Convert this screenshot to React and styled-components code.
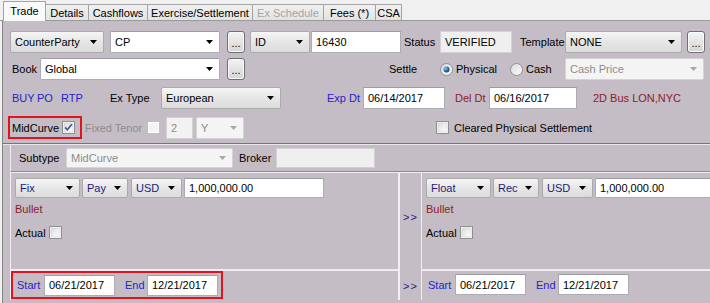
import React from 'react'
import styled, {createGlobalStyle, css} from 'styled-components'

const MAUVE = '#c4bdc6'
const BLUE = '#2424c8'
const DARKRED = '#8e1b27'
const NAVY = '#1d1d7a'
const GREY = '#8c8c8c'

const GlobalStyle = createGlobalStyle`
  html, body {
    margin: 0;
    padding: 0;
  }
  body {
    font-family: 'Liberation Sans', Arial, sans-serif;
    font-size: 11px;
    color: #000;
    background: #f0f0f0;
  }
`

const Screen = styled.div`
  width: 710px;
  height: 303px;
  overflow: hidden;
  display: flex;
  flex-direction: column;
  background: #f0f0f0;
`

const TabBar = styled.div`
  box-sizing: border-box;
  height: 21px;
  display: flex;
  align-items: flex-end;
  padding-left: 3px;
  border-bottom: 1px solid #9a9a9a;
`

const Tab = styled.div`
  box-sizing: border-box;
  width: ${p => p.$w}px;
  height: ${p => (p.$active ? 20 : 16)}px;
  margin-bottom: ${p => (p.$active ? -1 : 0)}px;
  display: flex;
  align-items: ${p => (p.$active ? 'flex-start' : 'center')};
  justify-content: center;
  padding-top: ${p => (p.$active ? 3 : 0)}px;
  border: 1px solid #a3a3a3;
  border-bottom: ${p => (p.$active ? 'none' : '0')};
  margin-right: -1px;
  background: ${p =>
    p.$active ? '#f9f9f9' : 'linear-gradient(#f0f0f0, #e3e3e3)'};
  color: ${p => (p.$disabled ? '#a5a5a5' : '#000')};
  position: relative;
  z-index: ${p => (p.$active ? 2 : 1)};
`

const Pane = styled.div`
  flex: 1;
  margin-left: 2px;
  border-left: 1px solid #858585;
  background: ${MAUVE};
  display: flex;
  flex-direction: column;
`

const TopForm = styled.div`
  padding: 10px 0 0 7px;
`

const Row = styled.div`
  display: flex;
  align-items: center;
  height: ${p => p.$h || 22}px;
  margin-top: ${p => p.$mt || 0}px;
  white-space: nowrap;
`

const Label = styled.span`
  flex: none;
  box-sizing: border-box;
  width: ${p => (p.$w ? `${p.$w}px` : 'auto')};
  margin-left: ${p => p.$ml || 0}px;
  color: ${p => p.$color || '#000'};
`

const comboSkins = {
  button: css`
    border: 1px solid #ababab;
    background: linear-gradient(#f5f5f5, #e6e6e6 50%, #dcdcdc);
  `,
  edit: css`
    border: 1px solid #abadb3;
    border-top-color: #9c9ea4;
    background: #fff;
  `,
  disabled: css`
    border: 1px solid #d5d5d5;
    background: #f4f4f4;
    color: ${GREY};
  `
}

const ComboBox = styled.div`
  flex: none;
  box-sizing: border-box;
  width: ${p => p.$w}px;
  height: ${p => p.$h || 22}px;
  margin-left: ${p => p.$ml || 0}px;
  display: flex;
  align-items: center;
  padding-left: 4px;
  border-radius: 2px;
  color: ${p => p.$color || '#000'};
  ${p => comboSkins[p.$kind || 'button']}
`

const ComboText = styled.span`
  flex: 1;
  overflow: hidden;
`

const ArrowIcon = styled.svg`
  flex: none;
  margin-right: ${p => p.$mr || 6}px;
`

const Combo = ({children, kind, w, h, ml, color}) => (
  <ComboBox $kind={kind} $w={w} $h={h} $ml={ml} $color={color}>
    <ComboText>{children}</ComboText>
    <ArrowIcon width="7" height="4" viewBox="0 0 7 4">
      <path d="M0 0 H7 L3.5 4 Z" fill={kind === 'disabled' ? '#a8a8a8' : '#000'} />
    </ArrowIcon>
  </ComboBox>
)

const fieldSkins = {
  edit: css`
    border: 1px solid #abadb3;
    border-top-color: #9c9ea4;
    background: #fff;
  `,
  readonly: css`
    border: 1px solid #d2d2d2;
    background: #efefef;
  `,
  disabled: css`
    border: 1px solid #d2d2d2;
    background: #f2f2f2;
    color: ${GREY};
  `
}

const Field = styled.div`
  flex: none;
  box-sizing: border-box;
  width: ${p => p.$w}px;
  height: ${p => p.$h || 22}px;
  margin-left: ${p => p.$ml || 0}px;
  display: flex;
  align-items: center;
  padding-left: 4px;
  ${p => fieldSkins[p.$kind || 'edit']}
`

const DotsButton = styled.div`
  flex: none;
  box-sizing: border-box;
  width: 18px;
  height: 22px;
  margin-left: ${p => p.$ml || 0}px;
  border: 1px solid #707070;
  border-radius: 3px;
  box-shadow: inset 0 0 0 1px #fafafa;
  background: linear-gradient(#f3f3f3, #e4e4e4 50%, #d6d6d6);
  display: flex;
  align-items: flex-end;
  justify-content: center;
  padding-bottom: 3px;
  font-size: 11px;
  line-height: 1;
`

const BoxIcon = styled.svg`
  flex: none;
  margin-left: ${p => p.$ml || 0}px;
`

const Check = ({checked, disabled, ml}) => (
  <BoxIcon $ml={ml} width="13" height="13" viewBox="0 0 13 13">
    <defs>
      <linearGradient id="chk" x1="0" y1="0" x2="1" y2="1">
        <stop offset="0" stopColor="#dcdcdc" />
        <stop offset="1" stopColor="#ffffff" />
      </linearGradient>
    </defs>
    <rect x="0.5" y="0.5" width="12" height="12" fill="#fff" stroke={disabled ? '#c0c0c0' : '#8e8f8f'} />
    <rect x="2" y="2" width="9" height="9" fill={disabled ? '#f4f4f4' : 'url(#chk)'} stroke={disabled ? 'none' : '#c8c8c8'} strokeWidth="0.6" />
    {checked && (
      <path d="M3.2 6.4 L5.3 8.8 L9.8 3.2" fill="none" stroke="#3b5b9e" strokeWidth="1.7" />
    )}
  </BoxIcon>
)

const Radio = ({checked, ml}) => (
  <BoxIcon $ml={ml} width="13" height="13" viewBox="0 0 13 13">
    <defs>
      <radialGradient id="rdo" cx="0.35" cy="0.35" r="0.7">
        <stop offset="0" stopColor="#8fd0f5" />
        <stop offset="0.6" stopColor="#2a6aa6" />
        <stop offset="1" stopColor="#153e6a" />
      </radialGradient>
      <linearGradient id="rbg" x1="0" y1="0" x2="1" y2="1">
        <stop offset="0" stopColor="#d8d8d8" />
        <stop offset="1" stopColor="#fdfdfd" />
      </linearGradient>
    </defs>
    <circle cx="6.5" cy="6.5" r="6" fill="url(#rbg)" stroke="#8e8f8f" />
    {checked && <circle cx="6.5" cy="6.5" r="3" fill="url(#rdo)" />}
  </BoxIcon>
)

const Highlight = styled.div`
  flex: none;
  box-sizing: border-box;
  display: flex;
  align-items: center;
  height: ${p => p.$h}px;
  width: ${p => p.$w}px;
  margin-left: ${p => p.$ml || 0}px;
  border: 2px solid #e0141e;
  padding-left: ${p => p.$pl || 0}px;
`

const Separator = styled.div`
  margin-top: 4px;
  border-top: 1px solid #77727a;
  border-bottom: 1px solid #ebe7ed;
`

const SubtypePanel = styled.div`
  margin-left: 7px;
  height: 27px;
  box-sizing: border-box;
  border-left: 1px solid #efedf0;
  border-bottom: 1px solid #8e8891;
  display: flex;
  align-items: center;
  padding-left: 8px;
`

const LegArea = styled.div`
  flex: 1;
  margin-left: 7px;
  border-top: 1px solid #f1eff2;
  display: grid;
  grid-template-columns: 390px 21px 1fr;
  grid-template-rows: 98px 29px;
`

const LegPanel = styled.div`
  box-sizing: border-box;
  border-left: 1px solid #f1eff2;
  border-right: ${p => (p.$open ? 'none' : '2px solid #f1eff2')};
  border-bottom: ${p => (p.$bottom ? 'none' : '2px solid #eeecef')};
  padding: ${p => p.$pad};
  display: flex;
  flex-direction: column;
`

const Gutter = styled.div`
  display: flex;
  align-items: ${p => p.$align || 'center'};
  justify-content: center;
  padding-top: ${p => p.$pt || 0}px;
  color: ${NAVY};
  letter-spacing: 1px;
`

const LegLine = styled.div`
  display: flex;
  align-items: center;
  height: ${p => p.$h}px;
  margin-top: ${p => p.$mt || 0}px;
  white-space: nowrap;
`

const Leg = ({type, dir, open}) => (
  <LegPanel $pad="5px 0 0 4px" $open={open}>
    <LegLine $h={20}>
      <Combo w={65} h={20} color={NAVY}>{type}</Combo>
      <Combo w={46} h={20} ml={2} color={NAVY}>{dir}</Combo>
      <Combo w={51} h={20} ml={3} color={NAVY}>USD</Combo>
      <Field $w={140} $h={20} $ml={2}>1,000,000.00</Field>
    </LegLine>
    <LegLine $h={12} $mt={5}>
      <Label $color={DARKRED}>Bullet</Label>
    </LegLine>
    <LegLine $h={13} $mt={11}>
      <Label $w={34}>Actual</Label>
      <Check />
    </LegLine>
  </LegPanel>
)

const DatesRow = ({boxed}) => {
  const inner = (
    <>
      <Label $w={27} $ml={boxed ? 4 : 6} $color={BLUE}>Start</Label>
      <Field $w={71} $h={21}>06/21/2017</Field>
      <Label $w={22} $ml={10} $color={BLUE}>End</Label>
      <Field $w={71} $h={21} $ml={0}>12/21/2017</Field>
    </>
  )
  return boxed ? (
    <Highlight $w={212} $h={28} $ml={0}>{inner}</Highlight>
  ) : (
    <LegLine $h={27}>{inner}</LegLine>
  )
}

export default function App() {
  return (
    <>
      <GlobalStyle />
      <Screen>
        <TabBar>
          <Tab $w={43} $active>Trade</Tab>
          <Tab $w={44}>Details</Tab>
          <Tab $w={60}>Cashflows</Tab>
          <Tab $w={106}>Exercise/Settlement</Tab>
          <Tab $w={72} $disabled>Ex Schedule</Tab>
          <Tab $w={53}>Fees (*)</Tab>
          <Tab $w={27}>CSA</Tab>
        </TabBar>
        <Pane>
          <TopForm>
            <Row>
              <Combo w={94}>CounterParty</Combo>
              <Combo w={110} ml={6} kind="edit">CP</Combo>
              <DotsButton $ml={7}>...</DotsButton>
              <Combo w={60} ml={5}>ID</Combo>
              <Field $w={90} $ml={1}>16430</Field>
              <Label $w={36} $ml={3}>Status</Label>
              <Field $w={72} $kind="readonly">VERIFIED</Field>
              <Label $w={45} $ml={8}>Template</Label>
              <Combo w={117}>NONE</Combo>
              <DotsButton $ml={5}>...</DotsButton>
            </Row>
            <Row $mt={5}>
              <Label $w={28} $ml={2}>Book</Label>
              <Combo w={180} kind="edit">Global</Combo>
              <DotsButton $ml={7}>...</DotsButton>
              <Label $w={51} $ml={144}>Settle</Label>
              <Radio checked />
              <Label $w={54} $ml={3}>Physical</Label>
              <Radio />
              <Label $w={39} $ml={3}>Cash</Label>
              <Combo w={139} kind="disabled">Cash Price</Combo>
            </Row>
            <Row $mt={7}>
              <Label $w={25} $ml={2} $color={BLUE}>BUY</Label>
              <Label $w={24} $color={BLUE}>PO</Label>
              <Label $w={49} $color={BLUE}>RTP</Label>
              <Label $w={51}>Ex Type</Label>
              <Combo w={120}>European</Combo>
              <Label $w={36} $ml={46} $color={BLUE}>Exp Dt</Label>
              <Field $w={82}>06/14/2017</Field>
              <Label $w={34} $ml={10} $color={DARKRED}>Del Dt</Label>
              <Field $w={88}>06/16/2017</Field>
              <Label $ml={16} $color={DARKRED}>2D Bus LON,NYC</Label>
            </Row>
            <Row $mt={7} $h={23}>
              <Highlight $w={74} $h={23} $ml={-2} $pl={2}>
                <Label $w={50}>MidCurve</Label>
                <Check checked />
              </Highlight>
              <Label $w={62} $ml={3} $color={GREY}>Fixed Tenor</Label>
              <Check disabled />
              <Field $w={27} $ml={6} $kind="disabled">2</Field>
              <Combo w={48} ml={3} kind="disabled">Y</Combo>
              <Check ml={192} />
              <Label $ml={5}>Cleared Physical Settlement</Label>
            </Row>
          </TopForm>
          <Separator />
          <SubtypePanel>
            <Label $w={47}>Subtype</Label>
            <Combo w={167} h={20} kind="disabled">MidCurve</Combo>
            <Label $w={37} $ml={6}>Broker</Label>
            <Field $w={99} $h={20} $kind="readonly">&nbsp;</Field>
          </SubtypePanel>
          <LegArea>
            <Leg type="Fix" dir="Pay" />
            <Gutter $align="flex-start" $pt={38}>&gt;&gt;</Gutter>
            <Leg type="Float" dir="Rec" open />
            <LegPanel $pad="0" $bottom>
              <DatesRow boxed />
            </LegPanel>
            <Gutter>&gt;&gt;</Gutter>
            <LegPanel $pad="0" $bottom $open>
              <DatesRow />
            </LegPanel>
          </LegArea>
        </Pane>
      </Screen>
    </>
  )
}
